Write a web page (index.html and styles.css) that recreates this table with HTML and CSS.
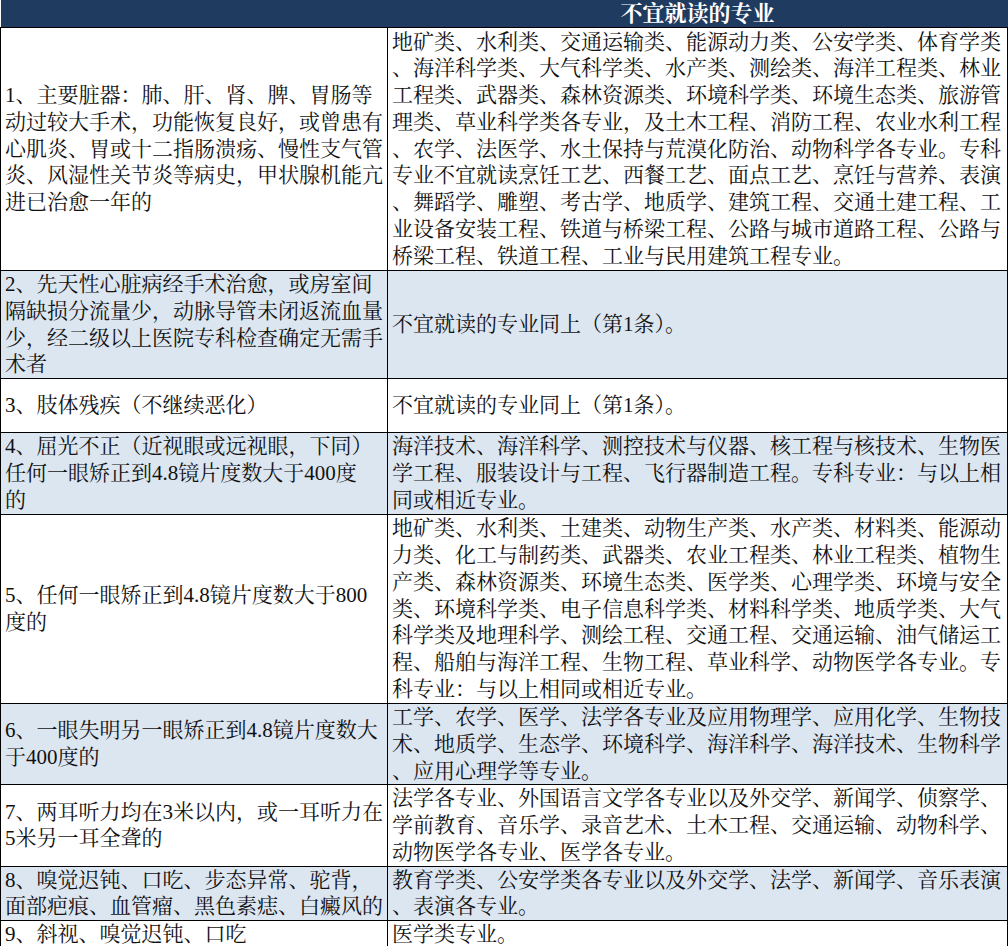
FILE: index.html
```html
<!DOCTYPE html>
<html lang="zh-CN">
<head>
<meta charset="utf-8">
<title>不宜就读的专业</title>
<link rel="stylesheet" href="styles.css">
</head>
<body>
<table class="sheet">
  <colgroup>
    <col class="col-cond">
    <col class="col-major">
  </colgroup>
  <thead>
    <tr class="head-row">
      <th class="head-cell"></th>
      <th class="head-cell">不宜就读的专业</th>
    </tr>
  </thead>
  <tbody>
    <tr class="row row-white h243">
      <td>1、主要脏器：肺、肝、肾、脾、胃肠等<br>动过较大手术，功能恢复良好，或曾患有<br>心肌炎、胃或十二指肠溃疡、慢性支气管<br>炎、风湿性关节炎等病史，甲状腺机能亢<br>进已治愈一年的</td>
      <td>地矿类、水利类、交通运输类、能源动力类、公安学类、体育学类<br>、海洋科学类、大气科学类、水产类、测绘类、海洋工程类、林业<br>工程类、武器类、森林资源类、环境科学类、环境生态类、旅游管<br>理类、草业科学类各专业，及土木工程、消防工程、农业水利工程<br>、农学、法医学、水土保持与荒漠化防治、动物科学各专业。专科<br>专业不宜就读烹饪工艺、西餐工艺、面点工艺、烹饪与营养、表演<br>、舞蹈学、雕塑、考古学、地质学、建筑工程、交通土建工程、工<br>业设备安装工程、铁道与桥梁工程、公路与城市道路工程、公路与<br>桥梁工程、铁道工程、工业与民用建筑工程专业。</td>
    </tr>
    <tr class="row row-blue h108">
      <td>2、先天性心脏病经手术治愈，或房室间<br>隔缺损分流量少，动脉导管未闭返流血量<br>少，经二级以上医院专科检查确定无需手<br>术者</td>
      <td>不宜就读的专业同上（第1条）。</td>
    </tr>
    <tr class="row row-white h54">
      <td>3、肢体残疾（不继续恶化）</td>
      <td>不宜就读的专业同上（第1条）。</td>
    </tr>
    <tr class="row row-blue h82">
      <td>4、屈光不正（近视眼或远视眼，下同）<br>任何一眼矫正到4.8镜片度数大于400度<br>的</td>
      <td>海洋技术、海洋科学、测控技术与仪器、核工程与核技术、生物医<br>学工程、服装设计与工程、飞行器制造工程。专科专业：与以上相<br>同或相近专业。</td>
    </tr>
    <tr class="row row-white h189">
      <td>5、任何一眼矫正到4.8镜片度数大于800<br>度的</td>
      <td>地矿类、水利类、土建类、动物生产类、水产类、材料类、能源动<br>力类、化工与制药类、武器类、农业工程类、林业工程类、植物生<br>产类、森林资源类、环境生态类、医学类、心理学类、环境与安全<br>类、环境科学类、电子信息科学类、材料科学类、地质学类、大气<br>科学类及地理科学、测绘工程、交通工程、交通运输、油气储运工<br>程、船舶与海洋工程、生物工程、草业科学、动物医学各专业。专<br>科专业：与以上相同或相近专业。</td>
    </tr>
    <tr class="row row-blue h80">
      <td>6、一眼失明另一眼矫正到4.8镜片度数大<br>于400度的</td>
      <td>工学、农学、医学、法学各专业及应用物理学、应用化学、生物技<br>术、地质学、生态学、环境科学、海洋科学、海洋技术、生物科学<br>、应用心理学等专业。</td>
    </tr>
    <tr class="row row-white h81">
      <td>7、两耳听力均在3米以内，或一耳听力在<br>5米另一耳全聋的</td>
      <td>法学各专业、外国语言文学各专业以及外交学、新闻学、侦察学、<br>学前教育、音乐学、录音艺术、土木工程、交通运输、动物科学、<br>动物医学各专业、医学各专业。</td>
    </tr>
    <tr class="row row-blue h54">
      <td>8、嗅觉迟钝、口吃、步态异常、驼背，<br>面部疤痕、血管瘤、黑色素痣、白癜风的</td>
      <td>教育学类、公安学类各专业以及外交学、法学、新闻学、音乐表演<br>、表演各专业。</td>
    </tr>
    <tr class="row row-white h40">
      <td class="top">9、斜视、嗅觉迟钝、口吃</td>
      <td class="top">医学类专业。</td>
    </tr>
  </tbody>
</table>
</body>
</html>
```

FILE: styles.css
```css
html, body {
  margin: 0;
  padding: 0;
  background: #ffffff;
}

.sheet {
  border-collapse: collapse;
  table-layout: fixed;
  width: 1007px;
  font-family: "Liberation Serif", "Noto Serif CJK SC", "Noto Sans CJK SC", serif;
  font-size: 21px;
  line-height: 26.75px;
  color: #111111;
}

.col-cond { width: 387px; }
.col-major { width: 620px; }

.head-row { height: 27px; }

.head-cell {
  background: #1f3b5f;
  color: #ffffff;
  font-weight: bold;
  font-size: 22px;
  line-height: 26px;
  text-align: center;
  padding: 0;
  border-top: 1px solid #1f3b5f;
  border-bottom: 1px solid #000000;
}

.sheet td {
  border: 1px solid #000000;
  padding: 0 3px 0 4px;
  vertical-align: middle;
  white-space: nowrap;
  overflow: hidden;
  text-align: left;
}

.sheet td.top { vertical-align: top; }

.row-white td { background: #ffffff; }
.row-blue td { background: #dce6f1; }

.h243 { height: 243px; }
.h108 { height: 108px; }
.h54 { height: 54px; }
.h82 { height: 82px; }
.h189 { height: 189px; }
.h80 { height: 80px; }
.h81 { height: 81px; }
.h40 { height: 40px; }
```
